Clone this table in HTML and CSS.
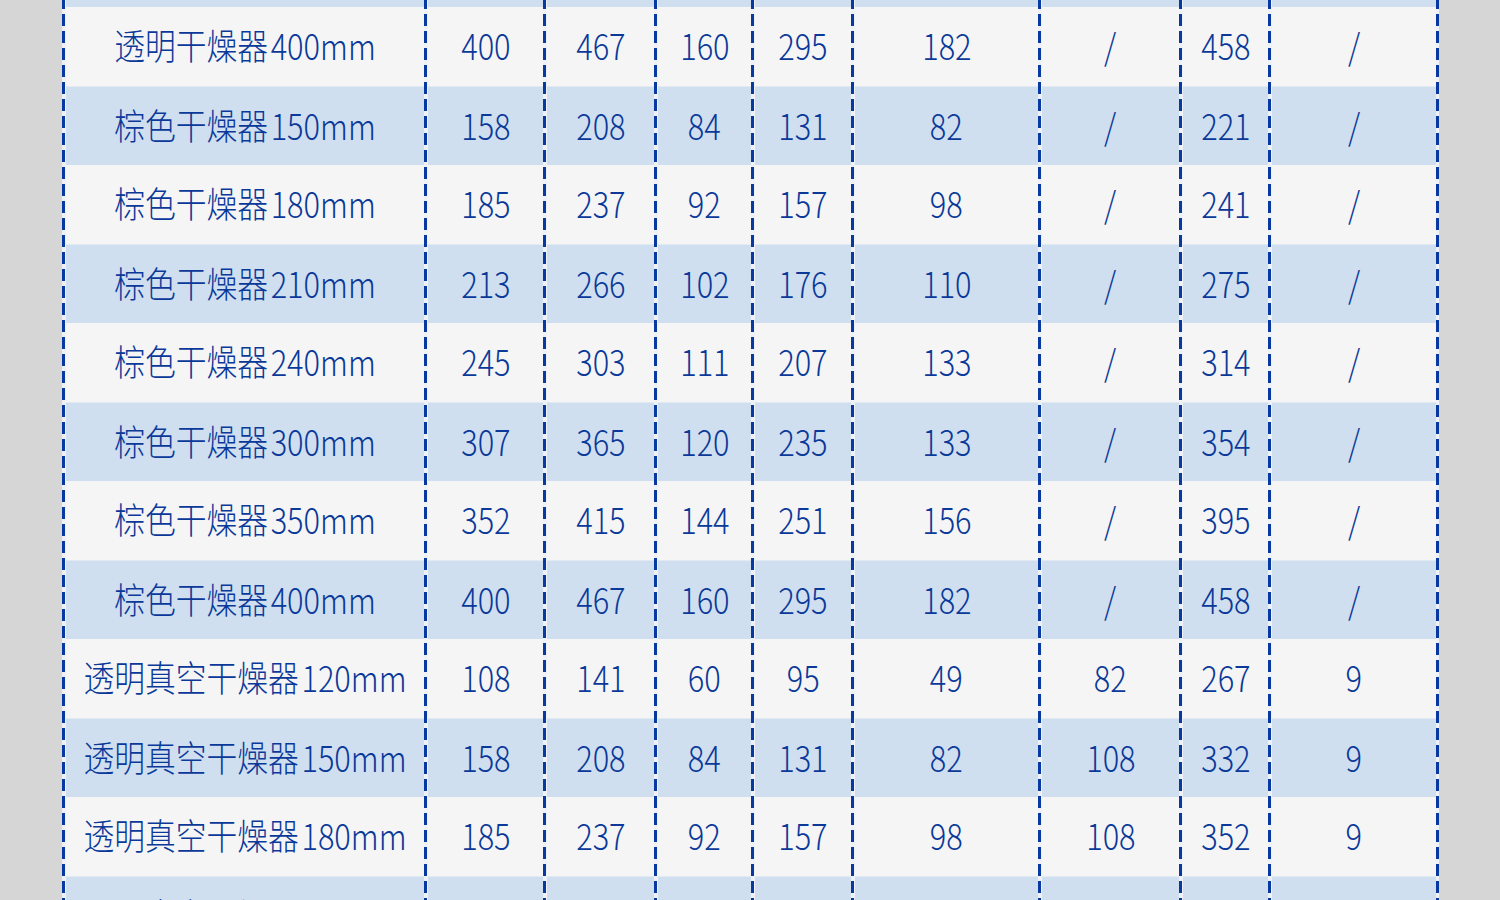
FILE: index.html
```html
<!DOCTYPE html>
<html lang="zh-CN">
<head>
<meta charset="utf-8">
<title>干燥器尺寸表</title>
<link rel="stylesheet" href="styles.css">
</head>
<body>
<div class="page">
  <div class="table">
    <div class="vline"></div>
    <div class="col c-name">
      <div class="cell b"><span class="t">透明干燥器<span class="sz">350mm</span></span></div>
      <div class="cell w"><span class="t">透明干燥器<span class="sz">400mm</span></span></div>
      <div class="cell b"><span class="t">棕色干燥器<span class="sz">150mm</span></span></div>
      <div class="cell w"><span class="t">棕色干燥器<span class="sz">180mm</span></span></div>
      <div class="cell b"><span class="t">棕色干燥器<span class="sz">210mm</span></span></div>
      <div class="cell w"><span class="t">棕色干燥器<span class="sz">240mm</span></span></div>
      <div class="cell b"><span class="t">棕色干燥器<span class="sz">300mm</span></span></div>
      <div class="cell w"><span class="t">棕色干燥器<span class="sz">350mm</span></span></div>
      <div class="cell b"><span class="t">棕色干燥器<span class="sz">400mm</span></span></div>
      <div class="cell w"><span class="t">透明真空干燥器<span class="sz">120mm</span></span></div>
      <div class="cell b"><span class="t">透明真空干燥器<span class="sz">150mm</span></span></div>
      <div class="cell w"><span class="t">透明真空干燥器<span class="sz">180mm</span></span></div>
      <div class="cell b"><span class="t">透明真空干燥器<span class="sz">210mm</span></span></div>
    </div>
    <div class="vline"></div>
    <div class="col c1">
      <div class="cell b"><span class="t">352</span></div><div class="cell w"><span class="t">400</span></div><div class="cell b"><span class="t">158</span></div><div class="cell w"><span class="t">185</span></div><div class="cell b"><span class="t">213</span></div><div class="cell w"><span class="t">245</span></div><div class="cell b"><span class="t">307</span></div><div class="cell w"><span class="t">352</span></div><div class="cell b"><span class="t">400</span></div><div class="cell w"><span class="t">108</span></div><div class="cell b"><span class="t">158</span></div><div class="cell w"><span class="t">185</span></div><div class="cell b"><span class="t">213</span></div>
    </div>
    <div class="vline"></div>
    <div class="col c2">
      <div class="cell b"><span class="t">415</span></div><div class="cell w"><span class="t">467</span></div><div class="cell b"><span class="t">208</span></div><div class="cell w"><span class="t">237</span></div><div class="cell b"><span class="t">266</span></div><div class="cell w"><span class="t">303</span></div><div class="cell b"><span class="t">365</span></div><div class="cell w"><span class="t">415</span></div><div class="cell b"><span class="t">467</span></div><div class="cell w"><span class="t">141</span></div><div class="cell b"><span class="t">208</span></div><div class="cell w"><span class="t">237</span></div><div class="cell b"><span class="t">266</span></div>
    </div>
    <div class="vline"></div>
    <div class="col c3">
      <div class="cell b"><span class="t">144</span></div><div class="cell w"><span class="t">160</span></div><div class="cell b"><span class="t">84</span></div><div class="cell w"><span class="t">92</span></div><div class="cell b"><span class="t">102</span></div><div class="cell w"><span class="t">111</span></div><div class="cell b"><span class="t">120</span></div><div class="cell w"><span class="t">144</span></div><div class="cell b"><span class="t">160</span></div><div class="cell w"><span class="t">60</span></div><div class="cell b"><span class="t">84</span></div><div class="cell w"><span class="t">92</span></div><div class="cell b"><span class="t">102</span></div>
    </div>
    <div class="vline"></div>
    <div class="col c4">
      <div class="cell b"><span class="t">251</span></div><div class="cell w"><span class="t">295</span></div><div class="cell b"><span class="t">131</span></div><div class="cell w"><span class="t">157</span></div><div class="cell b"><span class="t">176</span></div><div class="cell w"><span class="t">207</span></div><div class="cell b"><span class="t">235</span></div><div class="cell w"><span class="t">251</span></div><div class="cell b"><span class="t">295</span></div><div class="cell w"><span class="t">95</span></div><div class="cell b"><span class="t">131</span></div><div class="cell w"><span class="t">157</span></div><div class="cell b"><span class="t">176</span></div>
    </div>
    <div class="vline"></div>
    <div class="col c5">
      <div class="cell b"><span class="t">156</span></div><div class="cell w"><span class="t">182</span></div><div class="cell b"><span class="t">82</span></div><div class="cell w"><span class="t">98</span></div><div class="cell b"><span class="t">110</span></div><div class="cell w"><span class="t">133</span></div><div class="cell b"><span class="t">133</span></div><div class="cell w"><span class="t">156</span></div><div class="cell b"><span class="t">182</span></div><div class="cell w"><span class="t">49</span></div><div class="cell b"><span class="t">82</span></div><div class="cell w"><span class="t">98</span></div><div class="cell b"><span class="t">110</span></div>
    </div>
    <div class="vline"></div>
    <div class="col c6">
      <div class="cell b"><span class="t">/</span></div><div class="cell w"><span class="t">/</span></div><div class="cell b"><span class="t">/</span></div><div class="cell w"><span class="t">/</span></div><div class="cell b"><span class="t">/</span></div><div class="cell w"><span class="t">/</span></div><div class="cell b"><span class="t">/</span></div><div class="cell w"><span class="t">/</span></div><div class="cell b"><span class="t">/</span></div><div class="cell w"><span class="t">82</span></div><div class="cell b"><span class="t">108</span></div><div class="cell w"><span class="t">108</span></div><div class="cell b"><span class="t">120</span></div>
    </div>
    <div class="vline"></div>
    <div class="col c7">
      <div class="cell b"><span class="t">395</span></div><div class="cell w"><span class="t">458</span></div><div class="cell b"><span class="t">221</span></div><div class="cell w"><span class="t">241</span></div><div class="cell b"><span class="t">275</span></div><div class="cell w"><span class="t">314</span></div><div class="cell b"><span class="t">354</span></div><div class="cell w"><span class="t">395</span></div><div class="cell b"><span class="t">458</span></div><div class="cell w"><span class="t">267</span></div><div class="cell b"><span class="t">332</span></div><div class="cell w"><span class="t">352</span></div><div class="cell b"><span class="t">398</span></div>
    </div>
    <div class="vline"></div>
    <div class="col c8">
      <div class="cell b"><span class="t">/</span></div><div class="cell w"><span class="t">/</span></div><div class="cell b"><span class="t">/</span></div><div class="cell w"><span class="t">/</span></div><div class="cell b"><span class="t">/</span></div><div class="cell w"><span class="t">/</span></div><div class="cell b"><span class="t">/</span></div><div class="cell w"><span class="t">/</span></div><div class="cell b"><span class="t">/</span></div><div class="cell w"><span class="t">9</span></div><div class="cell b"><span class="t">9</span></div><div class="cell w"><span class="t">9</span></div><div class="cell b"><span class="t">9</span></div>
    </div>
    <div class="vline last"></div>
  </div>
</div>
</body>
</html>
```
FILE: styles.css
```css
html, body {
  margin: 0;
  padding: 0;
}
body {
  background: #d6d6d6;
  height: 900px;
  overflow: hidden;
  font-family: "Noto Sans CJK SC", "Noto Sans", sans-serif;
  font-weight: 300;
  color: #0a3999;
}
.page {
  padding-left: 62px;
}
.table {
  display: flex;
  margin-top: -72px;
  width: 1377px;
}
.vline {
  flex: 0 0 4px;
  background: linear-gradient(#0839a0 12px, transparent 12px) 0 1px / 3px 17px repeat-y, #eef2f7;
}
.vline.last {
  flex-basis: 3px;
}
.col {
  display: flex;
  flex-direction: column;
}
.c-name { width: 358px; }
.c1 { width: 115px; }
.c2 { width: 107px; }
.c3 { width: 93px; }
.c4 { width: 96px; }
.c5 { width: 183px; }
.c6 { width: 137px; }
.c7 { width: 85px; }
.c8 { width: 164px; }
.cell {
  height: 79px;
  box-sizing: border-box;
  display: flex;
  align-items: center;
  justify-content: center;
  padding-bottom: 5px;
  font-size: 36px;
  line-height: 1;
  white-space: nowrap;
}
.t {
  display: inline-block;
  transform: scaleX(0.855);
  transform-origin: center;
}
.sz {
  margin-left: 3px;
}
.cell.w {
  background: #f5f5f5;
}
.cell.b {
  background: #cfdff0;
  border-top: 1px solid #e1e9f3;
}
```
